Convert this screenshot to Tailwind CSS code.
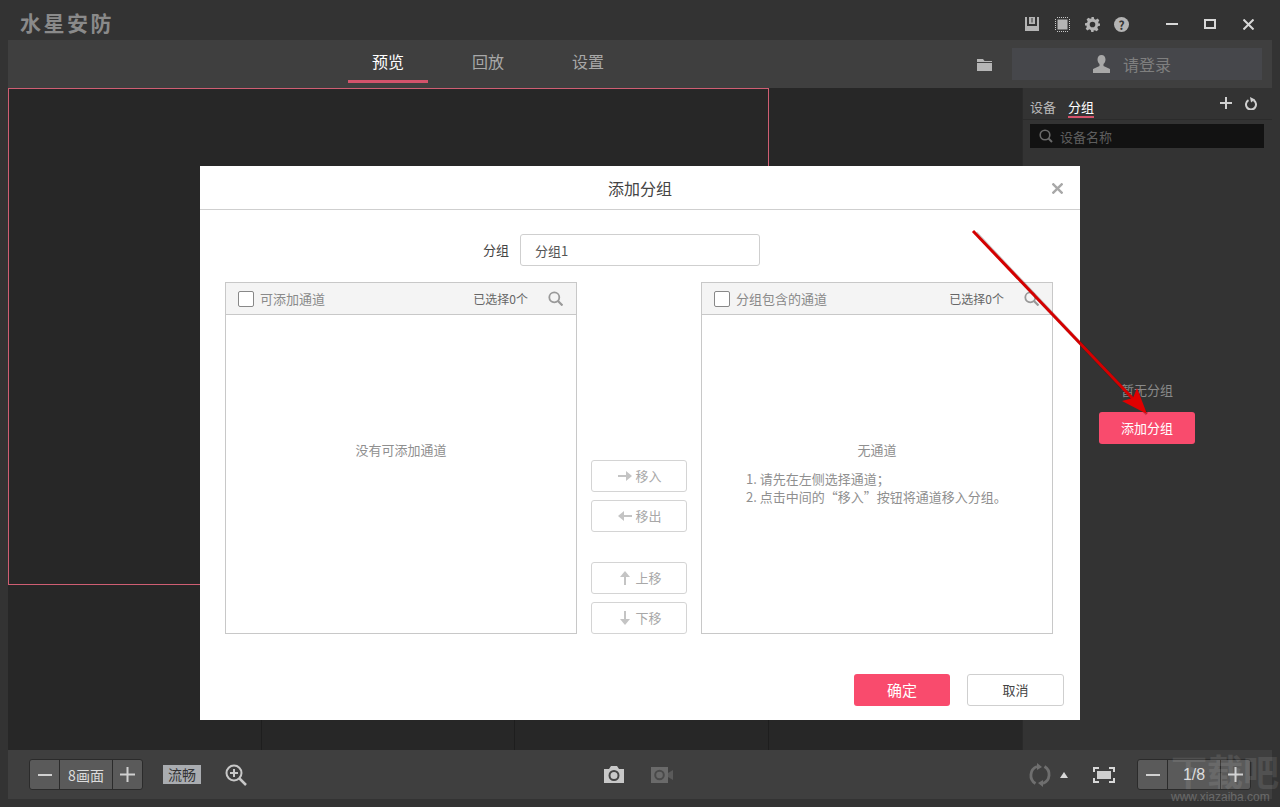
<!DOCTYPE html>
<html lang="zh-CN">
<head>
    <meta charset="UTF-8">
    <title>水星安防</title>
    <script src="https://cdn.jsdelivr.net/npm/@tailwindcss/browser@4"></script>
</head>
<body class="bg-[#333333] font-['Noto_Sans_CJK_SC','Liberation_Sans',sans-serif]">
<div class="relative w-[1280px] h-[807px] overflow-hidden bg-[#333333] flex flex-col">

    <!-- title bar -->
    <div class="h-10 flex items-center pl-5 shrink-0">
        <div class="mt-1 text-[21px] font-bold tracking-[2.500px] text-[#8a8a8a] leading-none">水星安防</div>
        <div class="ml-auto flex items-center mt-[8px]">
            <svg class="w-[14px] h-[14px] mr-[16px]" viewBox="0 0 14 14"><path fill="#b4b4b4" d="M0 0h2v9h10V0h2v14H0z"/><path fill="#b4b4b4" d="M4 0h6v7H4z"/><path fill="#333" d="M6.500 1h1v4.500h-1z"/></svg>
            <svg class="w-[15px] h-[15px] mr-[15px]" viewBox="0 0 15 15"><rect x="2.500" y="2.500" width="10" height="10" fill="#b4b4b4"/><path stroke="#c8c8c8" stroke-width="1" stroke-dasharray="1 1" d="M2 .5h11M2 14.500h11M.5 2v11M14.500 2v11"/></svg>
            <svg class="w-[15px] h-[15px] mr-[14px]" viewBox="0 0 24 24"><path fill="#b4b4b4" fill-rule="evenodd" d="M10 0h4l.7 3.300 2.500 1 2.900-1.800 2.800 2.800-1.800 2.900 1 2.500L24 10v4l-3.300.7-1 2.500 1.800 2.900-2.800 2.800-2.900-1.800-2.500 1L14 24h-4l-.7-3.300-2.500-1-2.900 1.800-2.800-2.800 1.800-2.900-1-2.500L0 14v-4l3.300-.7 1-2.500L2.500 3.900l2.800-2.800 2.900 1.800 2.500-1zM12 7.500a4.500 4.500 0 1 0 0 9 4.500 4.500 0 0 0 0-9z"/></svg>
            <div class="w-[15px] h-[15px] rounded-full bg-[#b4b4b4] text-[#333] text-[12px] font-bold leading-[15px] text-center mr-[37px]">?</div>
            <div class="w-3 h-[2px] bg-[#d8d8d8] mr-[26px]"></div>
            <div class="w-3 h-[10px] border-2 border-[#d8d8d8] mr-[27px]"></div>
            <svg class="w-[11px] h-[11px] mr-[26px]" viewBox="0 0 11 11"><path stroke="#d8d8d8" stroke-width="2" d="M.5.500l10 10M10.500.500l-10 10"/></svg>
        </div>
    </div>

    <!-- nav bar -->
    <div class="mx-2 h-12 bg-[#3f3f3f] flex shrink-0 relative">
        <div class="ml-[340px] flex gap-5 text-base">
            <div class="w-20 h-[43px] border-b-[3px] border-[#d4536b] text-white text-center pt-[9px] leading-6">预览</div>
            <div class="w-20 text-[#a8a8a8] text-center pt-[9px] leading-6">回放</div>
            <div class="w-20 text-[#a8a8a8] text-center pt-[9px] leading-6">设置</div>
        </div>
        <svg class="ml-auto mt-[19px] mr-[20px] w-[15px] h-[12px]" viewBox="0 0 15 12"><path fill="#b5b5b5" d="M0 0h6l1.500 2H15v1H0zM0 4h15v8H0z"/></svg>
        <div class="w-[250px] h-8 mt-2 mr-[10px] bg-[#46474b] flex items-center pl-[81px] text-base text-[#7f7f7f]">
            <svg class="w-[17px] h-[18px] mr-[13px]" viewBox="0 0 17 18"><path fill="#a8a8a8" d="M8.500 0c2.500 0 4 2 4 4.500 0 2-1 3.700-2 4.500v2l6.500 3v4H0v-4l6.500-3V9c-1-.8-2-2.500-2-4.500C4.500 2 6 0 8.500 0z"/></svg>
            请登录
        </div>
    </div>

    <!-- main -->
    <div class="mx-2 h-[662px] flex shrink-0">
        <!-- video grid -->
        <div class="w-[1014px] grid grid-cols-4 grid-rows-4 bg-[#272727]">
            <div class="col-span-3 row-span-3 border border-[#cf5e73]"></div>
            <div class="border-b border-[#1e1e1e]"></div>
            <div class="border-b border-[#1e1e1e]"></div>
            <div class="border-b border-[#1e1e1e]"></div>
            <div class="border-r border-[#1e1e1e]"></div>
            <div class="border-r border-[#1e1e1e]"></div>
            <div class="border-r border-[#1e1e1e]"></div>
            <div></div>
        </div>
        <!-- side panel -->
        <div class="w-[250px] bg-[#333333] border-l border-[#2a2a2a] flex flex-col">
            <div class="h-[32px] border-b border-[#2b2b2b] flex pl-[7px] pr-[15px] text-[13px] text-[#b8b8b8]">
                <div class="mt-[9px] h-5 leading-5">设备</div>
                <div class="mt-[9px] ml-3 h-[21px] leading-5 text-white border-b-2 border-[#d4536b]">分组</div>
                <svg class="ml-auto mt-[9px] w-3 h-3" viewBox="0 0 12 12"><path stroke="#d0d0d0" stroke-width="2" d="M6 0v12M0 6h12"/></svg>
                <svg class="ml-[13px] mt-[9px] w-3 h-[13px]" viewBox="0 0 12 13"><path fill="none" stroke="#d0d0d0" stroke-width="2" d="M8.500 3.200a5 5 0 1 1-5 0"/><path fill="#d0d0d0" d="M5 0l5 2.500L6 5.500z"/></svg>
            </div>
            <div class="mt-[4px] ml-[7px] w-[234px] h-6 bg-[#121212] flex items-center pl-[9px] text-[13px] text-[#5e5e5e]">
                <svg class="w-[14px] h-[14px] mr-[7px]" viewBox="0 0 14 14"><circle cx="6" cy="6" r="4.800" fill="none" stroke="#6a6a6a" stroke-width="1.600"/><path stroke="#6a6a6a" stroke-width="2" d="M9.500 9.500l3.500 3.500"/></svg>
                <span class="mt-[1px]">设备名称</span>
            </div>
            <div class="mt-[232px] ml-[76px] w-[96px] text-center text-[13px] leading-5 text-[#8a8a8a]">暂无分组</div>
            <div class="mt-[12px] ml-[76px] w-[96px] h-8 rounded-[3px] bg-[#f94b6d] text-white text-[13px] leading-8 text-center">添加分组</div>
        </div>
    </div>

    <!-- bottom bar -->
    <div class="mx-2 h-[49px] bg-[#3f3f3f] flex items-center shrink-0 relative">
        <div class="ml-[21px] h-[31px] w-[114px] flex rounded-[3px] border border-[#2b2b2b] bg-[#5a5a5a] text-[14px] text-[#dcdcdc]">
            <div class="w-[30px] border-r border-[#2b2b2b] flex items-center justify-center"><div class="w-[14px] h-[2px] bg-[#d0d0d0]"></div></div>
            <div class="w-[53px] border-r border-[#2b2b2b] text-center leading-[30px]">8画面</div>
            <div class="flex-1 flex items-center justify-center"><svg class="w-[15px] h-[15px]" viewBox="0 0 15 15"><path stroke="#d0d0d0" stroke-width="2" d="M7.500 0v15M0 7.500h15"/></svg></div>
        </div>
        <div class="ml-[20px] w-[38px] h-[19px] bg-[#a9acb0] text-[#333] text-[14px] leading-[19px] text-center">流畅</div>
        <svg class="ml-[24px] w-[22px] h-[22px]" viewBox="0 0 22 22"><circle cx="9" cy="9" r="7.500" fill="none" stroke="#c8c8c8" stroke-width="2"/><path stroke="#c8c8c8" stroke-width="2" d="M5 9h8M9 5v8"/><path stroke="#c8c8c8" stroke-width="2.500" d="M14.500 14.500l6.500 6.500"/></svg>
        <svg class="ml-[357px] w-[20px] h-[17px]" viewBox="0 0 20 17"><path fill="#c8c8c8" d="M0 3h5l2-3h6l2 3h5v14H0z"/><circle cx="10" cy="9.500" r="4.500" fill="none" stroke="#444" stroke-width="2"/></svg>
        <svg class="ml-[27px] w-[22px] h-[16px]" viewBox="0 0 22 16"><rect width="17" height="16" fill="#6a6a6a"/><circle cx="8.500" cy="8" r="4.300" fill="none" stroke="#4a4a4a" stroke-width="2"/><path fill="#5a5a5a" d="M17 6l5-3v10l-5-3z"/></svg>
        <svg class="ml-[355px] w-[24px] h-[24px]" viewBox="0 0 24 24"><path fill="none" stroke="#6f6f6f" stroke-width="2.800" d="M9 3.500A9.500 9.500 0 0 0 7.500 20.500M15 20.500A9.500 9.500 0 0 0 16.500 3.500"/><path fill="#6f6f6f" d="M9 0l5 4-5 3zM15 24l-5-4 5-3z"/></svg>
        <div class="ml-[8px] w-0 h-0 border-x-[4px] border-x-transparent border-b-[6px] border-b-[#d8d8d8]"></div>
        <svg class="ml-[25px] w-[22px] h-[16px]" viewBox="0 0 22 16"><path fill="none" stroke="#d8d8d8" stroke-width="2" d="M1 5V1h5M16 1h5v4M21 11v4h-5M6 15H1v-4"/><rect x="4" y="4" width="14" height="8" fill="#d0d0d0"/></svg>
        <div class="ml-[22px] h-[31px] w-[114px] flex rounded-[3px] border border-[#2b2b2b] bg-[#5a5a5a] text-[16px] text-[#dcdcdc]">
            <div class="w-[30px] border-r border-[#2b2b2b] flex items-center justify-center"><div class="w-[14px] h-[2px] bg-[#d0d0d0]"></div></div>
            <div class="w-[53px] border-r border-[#2b2b2b] text-center leading-[30px] font-['Liberation_Sans',sans-serif]">1/8</div>
            <div class="flex-1 flex items-center justify-center"><svg class="w-[15px] h-[15px]" viewBox="0 0 15 15"><path stroke="#d0d0d0" stroke-width="2" d="M7.500 0v15M0 7.500h15"/></svg></div>
        </div>
    </div>

    <!-- watermark -->
    <div class="absolute left-[1171px] top-[752px] w-[109px] text-white leading-none">
        <div class="text-[36px] font-bold whitespace-nowrap opacity-[0.09]">下载吧</div>
        <div class="text-[12px] font-['Liberation_Sans',sans-serif] mt-[3px] whitespace-nowrap opacity-[0.22]">www.xiazaiba.com</div>
    </div>

    <!-- dialog -->
    <div class="absolute left-[200px] top-[166px] w-[880px] h-[554px] bg-white flex flex-col text-[13px]">
        <div class="h-11 shrink-0 border-b border-[#cfcfcf] relative text-center text-base text-[#444] leading-[44px]">
            添加分组
            <svg class="absolute right-[17px] top-[17px] w-[11px] h-[11px]" viewBox="0 0 11 11"><path stroke="#a8a8a8" stroke-width="2.400" d="M.5.500l10 10M10.500.500l-10 10"/></svg>
        </div>
        <div class="mt-6 flex items-center h-8 pl-[283px] text-[#444]">
            <span class="w-[37px]">分组</span>
            <div class="w-[240px] h-8 border border-[#cfcfcf] rounded-[3px] pl-[14px] leading-[32px] text-[#555]">分组1</div>
        </div>
        <div class="mt-4 pl-[25px] flex">
            <!-- left list -->
            <div class="w-[352px] h-[352px] border border-[#c8c8c8] flex flex-col">
                <div class="h-[32px] shrink-0 bg-[#f4f4f4] border-b border-[#c8c8c8] flex items-center pl-3 pr-[13px]">
                    <div class="w-4 h-4 bg-white border border-[#888] rounded-[2px] mr-[6px]"></div>
                    <span class="text-[#8a8a8a]">可添加通道</span>
                    <span class="ml-auto text-xs text-[#666] mr-[20px]">已选择0个</span>
                    <svg class="w-[15px] h-[15px]" viewBox="0 0 15 15"><circle cx="6.300" cy="6.300" r="5" fill="none" stroke="#999" stroke-width="1.800"/><path stroke="#999" stroke-width="2.200" d="M10 10l4.500 4.500"/></svg>
                </div>
                <div class="pt-[125px] text-center text-[#8f8f8f] leading-5">没有可添加通道</div>
            </div>
            <!-- move buttons -->
            <div class="w-[124px] pl-[14px] pt-[178px] flex flex-col text-[#a8a8a8]">
                <div class="w-24 h-8 pl-[2px] border border-[#d4d4d4] rounded-[3px] flex items-center justify-center gap-[3px]">
                    <svg class="w-[14px] h-[10px]" viewBox="0 0 14 10"><path stroke="#c4c4c4" stroke-width="2" d="M0 5h9"/><path fill="#c4c4c4" d="M8 0l6 5-6 5z"/></svg>移入
                </div>
                <div class="mt-2 w-24 h-8 pl-[2px] border border-[#d4d4d4] rounded-[3px] flex items-center justify-center gap-[3px]">
                    <svg class="w-[14px] h-[10px]" viewBox="0 0 14 10"><path stroke="#c4c4c4" stroke-width="2" d="M5 5h9"/><path fill="#c4c4c4" d="M6 0L0 5l6 5z"/></svg>移出
                </div>
                <div class="mt-[30px] w-24 h-8 pl-1 border border-[#d4d4d4] rounded-[3px] flex items-center justify-center gap-[5px]">
                    <svg class="w-[10px] h-[14px]" viewBox="0 0 10 14"><path stroke="#c4c4c4" stroke-width="2" d="M5 5v9"/><path fill="#c4c4c4" d="M0 6l5-6 5 6z"/></svg>上移
                </div>
                <div class="mt-2 w-24 h-8 pl-1 border border-[#d4d4d4] rounded-[3px] flex items-center justify-center gap-[5px]">
                    <svg class="w-[10px] h-[14px]" viewBox="0 0 10 14"><path stroke="#c4c4c4" stroke-width="2" d="M5 0v9"/><path fill="#c4c4c4" d="M0 8l5 6 5-6z"/></svg>下移
                </div>
            </div>
            <!-- right list -->
            <div class="w-[352px] h-[352px] border border-[#c8c8c8] flex flex-col">
                <div class="h-[32px] shrink-0 bg-[#f4f4f4] border-b border-[#c8c8c8] flex items-center pl-3 pr-[13px]">
                    <div class="w-4 h-4 bg-white border border-[#888] rounded-[2px] mr-[6px]"></div>
                    <span class="text-[#8a8a8a]">分组包含的通道</span>
                    <span class="ml-auto text-xs text-[#666] mr-[20px]">已选择0个</span>
                    <svg class="w-[15px] h-[15px]" viewBox="0 0 15 15"><circle cx="6.300" cy="6.300" r="5" fill="none" stroke="#999" stroke-width="1.800"/><path stroke="#999" stroke-width="2.200" d="M10 10l4.500 4.500"/></svg>
                </div>
                <div class="pt-[125px] text-center text-[#8f8f8f] leading-5">无通道</div>
                <div class="pt-[10px] pl-[44px] text-[#8f8f8f] leading-[18px]">
                    <p>1. 请先在左侧选择通道；</p>
                    <p>2. 点击中间的“移入”按钮将通道移入分组。</p>
                </div>
            </div>
        </div>
        <div class="mt-10 flex pl-[654px]">
            <div class="w-24 h-8 rounded-[3px] bg-[#f94b6d] text-white text-[15px] text-center leading-8">确定</div>
            <div class="ml-[17px] w-[97px] h-8 rounded-[3px] border border-[#cfcfcf] text-[#444] text-center leading-[30px]">取消</div>
        </div>
    </div>

    <!-- red annotation arrow -->
    <svg class="absolute left-0 top-0 w-[1280px] h-[807px] pointer-events-none" viewBox="0 0 1280 807">
        <path d="M976 233L1147 414" stroke="#000" stroke-opacity=".22" stroke-width="3.500"/>
        <path d="M973 231L1136 402" stroke="#d40000" stroke-width="3"/>
        <path fill="#e00000" d="M1147 414L1122 401L1133 398L1137 388z"/>
    </svg>
</div>
</body>
</html>
